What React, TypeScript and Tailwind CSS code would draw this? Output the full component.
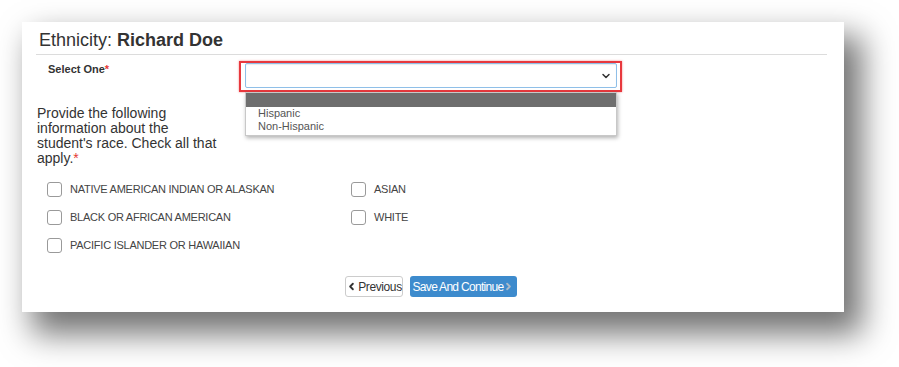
import { ChevronDown, ChevronLeft, ChevronRight } from 'lucide-react';
import { Fragment } from 'react';

const races: [string, string | null][] = [
  ['NATIVE AMERICAN INDIAN OR ALASKAN', 'ASIAN'],
  ['BLACK OR AFRICAN AMERICAN', 'WHITE'],
  ['PACIFIC ISLANDER OR HAWAIIAN', null],
];

function RaceOption({ label }: { label: string }) {
  return (
    <label className="flex items-center gap-[8px] h-[28px]">
      <span className="w-[15px] h-[15px] rounded-[3px] border border-[#9a9a9a] bg-white shrink-0" />
      <span className="text-[11px] text-[#444] tracking-[-0.25px]">{label}</span>
    </label>
  );
}

export default function App() {
  return (
    <div className="w-[899px] h-[367px] bg-white overflow-hidden pt-[22px] pl-[22px]" style={{ fontFamily: '"Liberation Sans", Arial, sans-serif' }}>
      <div className="relative w-[822px] h-[290px] bg-white shadow-[14px_18px_30px_4px_rgba(0,0,0,0.55)]">
        {/* Header */}
        <h2 className="pl-[17px] pt-[7px] text-[18px] leading-[22px] text-[#333]">
          Ethnicity: <span className="font-bold">Richard Doe</span>
        </h2>
        <div className="mt-[3px] ml-[14px] mr-[17px] border-t border-[#dcdcdc]" />

        {/* Ethnicity select */}
        <div className="flex mt-[6px]">
          <div className="w-[217px] pl-[26px] pt-[1px] text-[11px] leading-[14px] font-bold text-[#333]">
            Select One<span className="text-[#e53935]">*</span>
          </div>
          <div className="w-[383px] h-[31px] border-2 border-[#e8383d] pl-[4px] pr-[3px] shadow-[0_0_2px_rgba(232,56,61,0.6)]">
            <div className="h-[25px] border border-[#8fbfe8] rounded-[2px] bg-white flex items-center justify-end pr-[4px] shadow-[inset_0_1px_1px_rgba(0,0,0,0.08)]">
              <ChevronDown className="w-[12px] h-[12px] text-[#333]" strokeWidth={3} />
            </div>
          </div>
        </div>

        {/* Open dropdown menu */}
        <div className="absolute left-[223px] top-[70px] w-[372px] bg-white border border-[#c8c8c8] shadow-[1px_2px_4px_rgba(0,0,0,0.3)]">
          <div className="h-[14px] bg-[#6e6e6e]" />
          <div className="pl-[12px] pb-[2px] text-[11px] leading-[13px] text-[#555]">
            <div>Hispanic</div>
            <div>Non-Hispanic</div>
          </div>
        </div>

        {/* Race */}
        <p className="mt-[14px] ml-[15px] w-[182px] text-[14px] leading-[15px] text-[#333]">
          Provide the following information about the student's race. Check all that apply.
          <span className="text-[#e53935]">*</span>
        </p>

        <div className="mt-[9px] ml-[25px] grid grid-cols-[304px_1fr]">
          {races.map(([a, b]) => (
            <Fragment key={a}>
              <RaceOption label={a} />
              {b ? <RaceOption label={b} /> : <div />}
            </Fragment>
          ))}
        </div>

        {/* Footer buttons */}
        <div className="mt-[17px] flex justify-center gap-[7px] pr-[4px]">
          <button className="h-[21px] w-[58px] flex items-center justify-center gap-[1px] border border-[#ccc] rounded-[3px] bg-white text-[12px] text-[#333] tracking-[-0.4px] whitespace-nowrap">
            <ChevronLeft className="w-[11px] h-[11px]" strokeWidth={4} />
            Previous
          </button>
          <button className="h-[21px] w-[107px] flex items-center justify-center gap-0 rounded-[3px] bg-[#3d8bcd] text-[12px] text-white tracking-[-0.7px] whitespace-nowrap">
            Save And Continue
            <ChevronRight className="w-[11px] h-[11px] text-[#a9b9c8]" strokeWidth={4} />
          </button>
        </div>
      </div>
    </div>
  );
}
